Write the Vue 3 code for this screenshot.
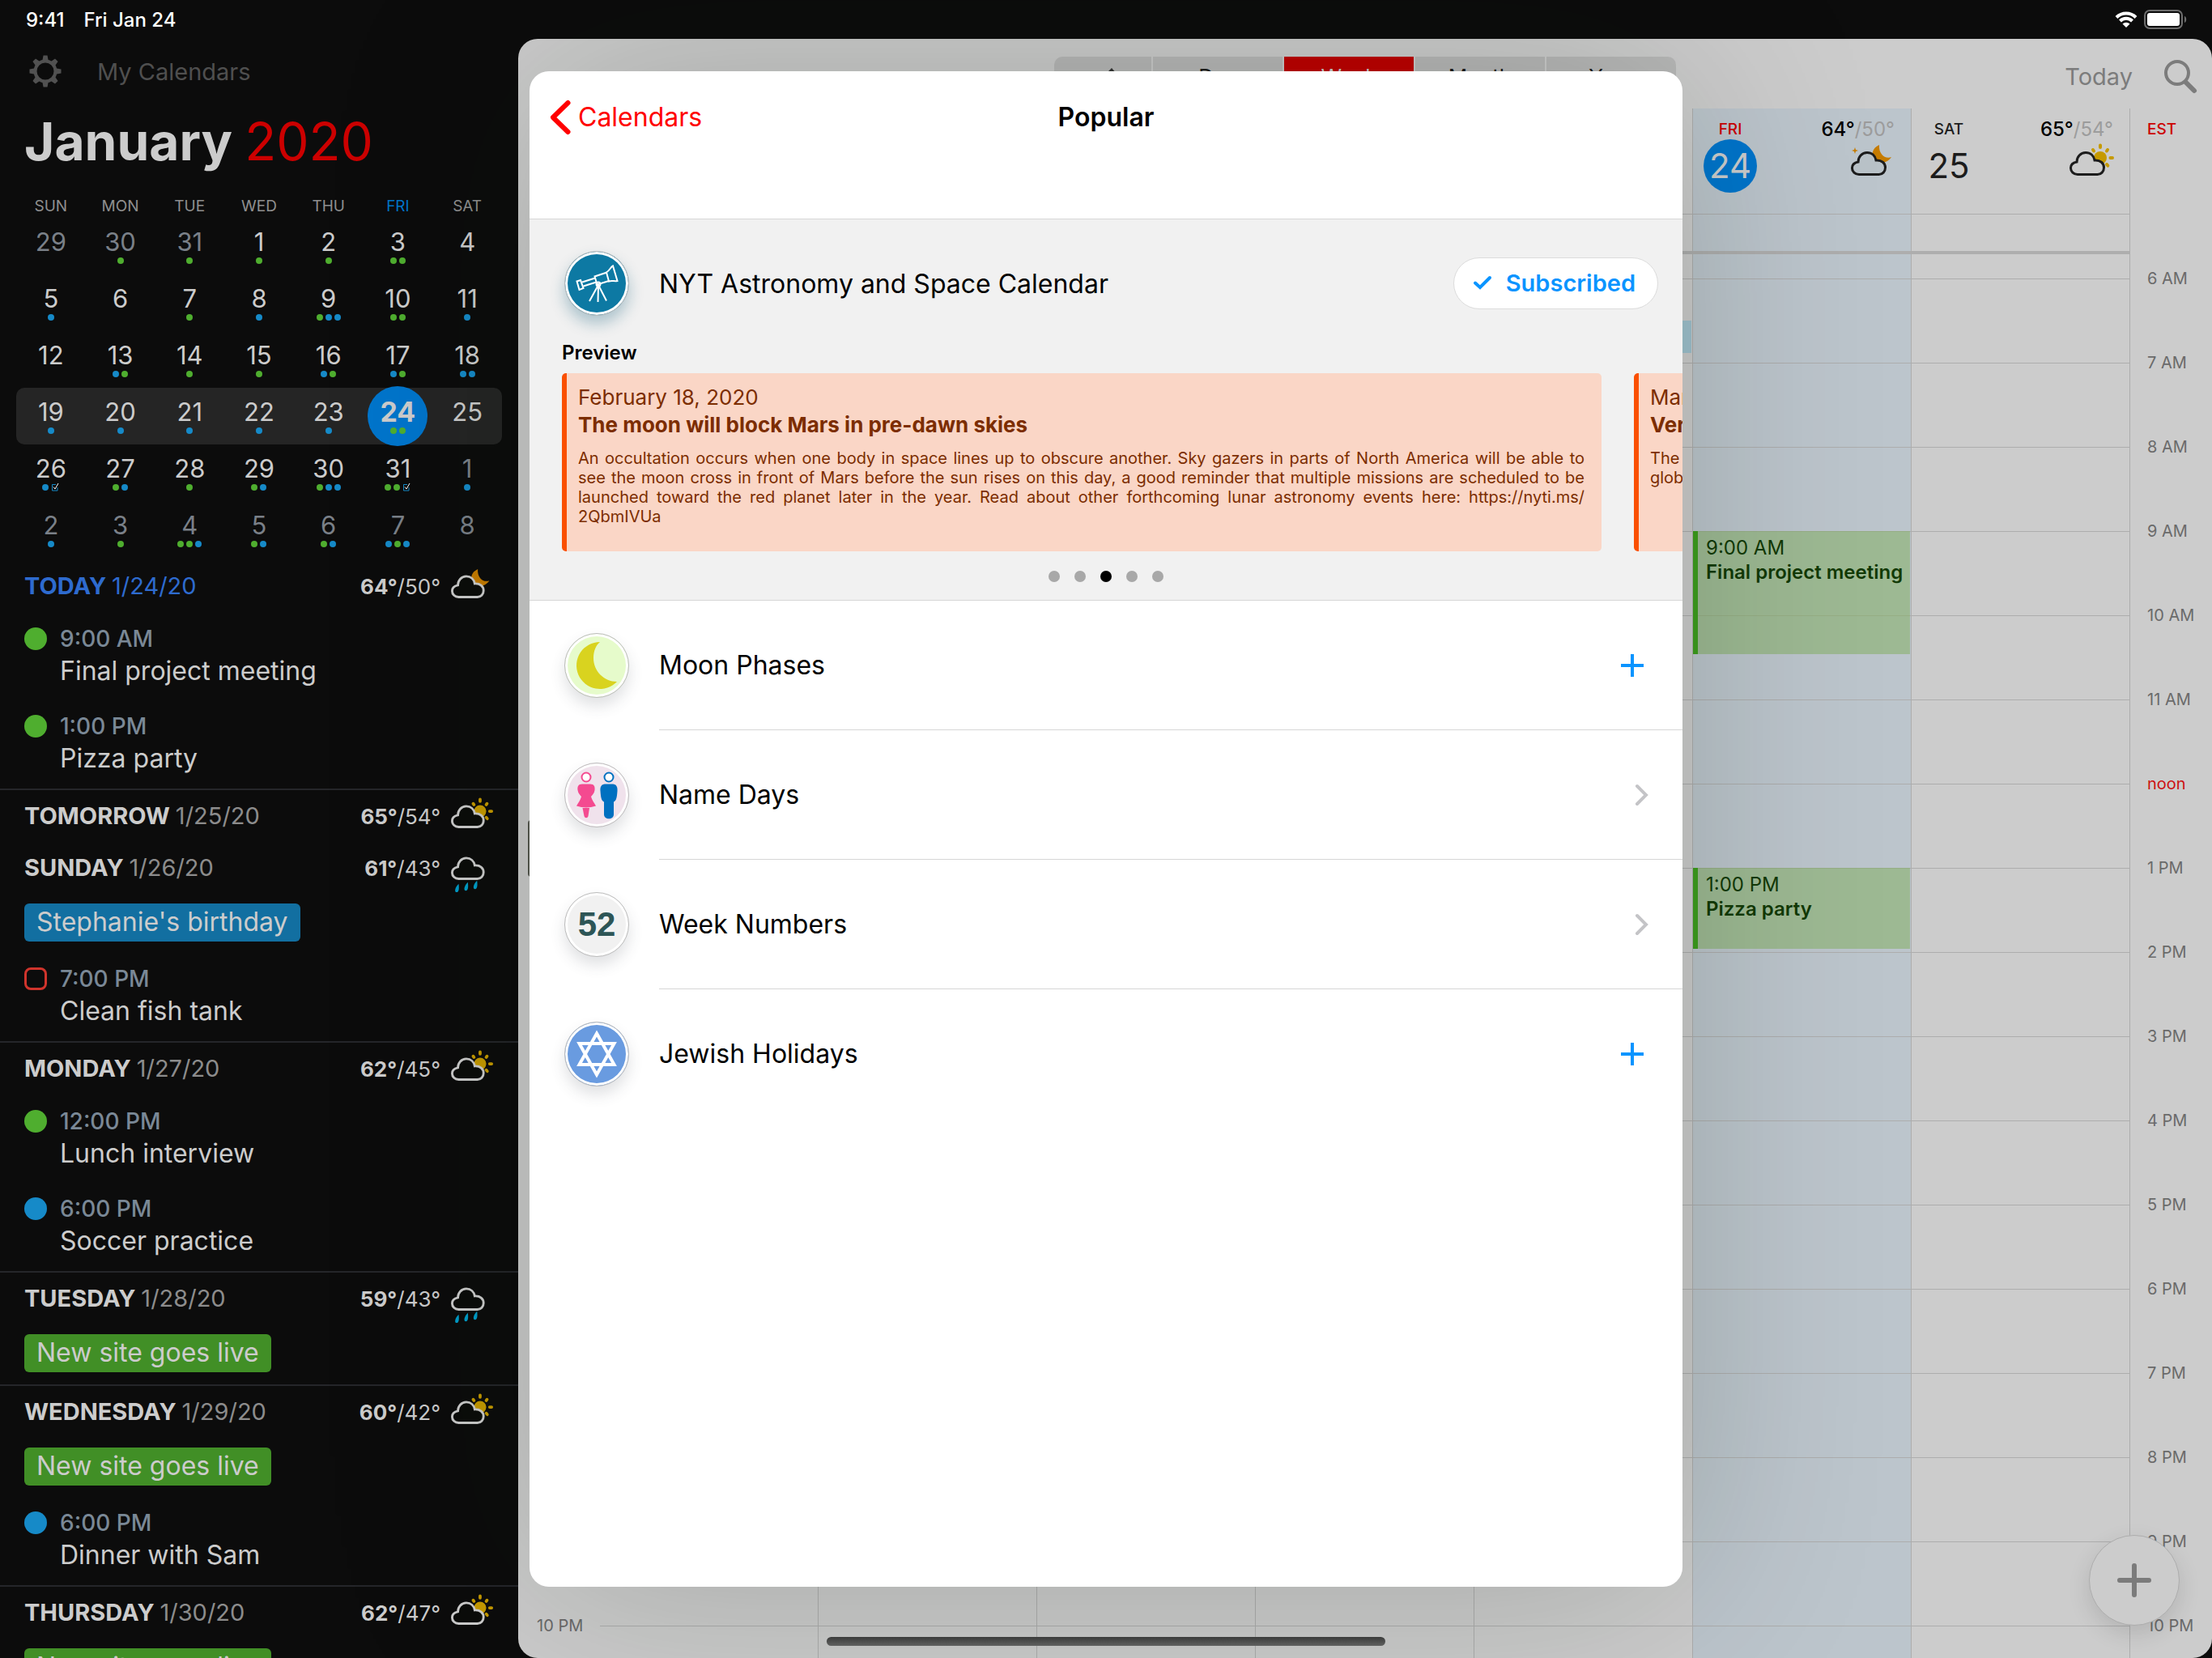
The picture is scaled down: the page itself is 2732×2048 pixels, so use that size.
<script setup>
import { h, ref } from "vue";

const GREEN = 'green'
const BLUE = 'blue'
const TASK = 'task'

const weekdays = ['SUN', 'MON', 'TUE', 'WED', 'THU', 'FRI', 'SAT']

const weeks = ref([
  {
    days: [
      { n: 29, out: true, marks: [] },
      { n: 30, out: true, marks: [GREEN] },
      { n: 31, out: true, marks: [GREEN] },
      { n: 1, marks: [GREEN] },
      { n: 2, marks: [GREEN] },
      { n: 3, marks: [GREEN, GREEN] },
      { n: 4, marks: [] }
    ]
  },
  {
    days: [
      { n: 5, marks: [BLUE] },
      { n: 6, marks: [] },
      { n: 7, marks: [GREEN] },
      { n: 8, marks: [BLUE] },
      { n: 9, marks: [GREEN, BLUE, BLUE] },
      { n: 10, marks: [GREEN, GREEN] },
      { n: 11, marks: [BLUE] }
    ]
  },
  {
    days: [
      { n: 12, marks: [] },
      { n: 13, marks: [BLUE, GREEN] },
      { n: 14, marks: [GREEN] },
      { n: 15, marks: [GREEN] },
      { n: 16, marks: [BLUE, GREEN] },
      { n: 17, marks: [BLUE, GREEN] },
      { n: 18, marks: [BLUE, BLUE] }
    ]
  },
  {
    current: true,
    days: [
      { n: 19, marks: [BLUE] },
      { n: 20, marks: [BLUE] },
      { n: 21, marks: [BLUE] },
      { n: 22, marks: [BLUE] },
      { n: 23, marks: [BLUE] },
      { n: 24, today: true, marks: [GREEN, GREEN] },
      { n: 25, marks: [] }
    ]
  },
  {
    days: [
      { n: 26, marks: [BLUE, TASK] },
      { n: 27, marks: [GREEN, BLUE] },
      { n: 28, marks: [GREEN] },
      { n: 29, marks: [GREEN, BLUE] },
      { n: 30, marks: [GREEN, BLUE, BLUE] },
      { n: 31, marks: [GREEN, GREEN, TASK] },
      { n: 1, out: true, marks: [BLUE] }
    ]
  },
  {
    days: [
      { n: 2, out: true, marks: [BLUE] },
      { n: 3, out: true, marks: [GREEN] },
      { n: 4, out: true, marks: [GREEN, GREEN, BLUE] },
      { n: 5, out: true, marks: [GREEN, BLUE] },
      { n: 6, out: true, marks: [GREEN, BLUE] },
      { n: 7, out: true, marks: [BLUE, GREEN, BLUE] },
      { n: 8, out: true, marks: [] }
    ]
  }
])

const agenda = ref([
  {
    name: 'TODAY', date: '1/24/20', today: true, line: true, hi: '64°', lo: '50°', sky: 'moon',
    items: [
      { kind: 'dot', color: GREEN, time: '9:00 AM', title: 'Final project meeting' },
      { kind: 'dot', color: GREEN, time: '1:00 PM', title: 'Pizza party' }
    ]
  },
  { name: 'TOMORROW', date: '1/25/20', hi: '65°', lo: '54°', sky: 'sun', items: [] },
  {
    name: 'SUNDAY', date: '1/26/20', line: true, hi: '61°', lo: '43°', sky: 'rain',
    items: [
      { kind: 'allday', color: BLUE, title: "Stephanie's birthday" },
      { kind: 'task', time: '7:00 PM', title: 'Clean fish tank' }
    ]
  },
  {
    name: 'MONDAY', date: '1/27/20', line: true, hi: '62°', lo: '45°', sky: 'sun',
    items: [
      { kind: 'dot', color: GREEN, time: '12:00 PM', title: 'Lunch interview' },
      { kind: 'dot', color: BLUE, time: '6:00 PM', title: 'Soccer practice' }
    ]
  },
  {
    name: 'TUESDAY', date: '1/28/20', line: true, hi: '59°', lo: '43°', sky: 'rain',
    items: [{ kind: 'allday', color: GREEN, title: 'New site goes live' }]
  },
  {
    name: 'WEDNESDAY', date: '1/29/20', line: true, hi: '60°', lo: '42°', sky: 'sun',
    items: [
      { kind: 'allday', color: GREEN, title: 'New site goes live' },
      { kind: 'dot', color: BLUE, time: '6:00 PM', title: 'Dinner with Sam' }
    ]
  },
  {
    name: 'THURSDAY', date: '1/30/20', line: true, hi: '62°', lo: '47°', sky: 'sun',
    items: [{ kind: 'allday', color: GREEN, title: 'New site goes live' }]
  }
])

const views = ['Day', 'Week', 'Month', 'Year']
const view = ref('Week')

const hours = [
  '6 AM', '7 AM', '8 AM', '9 AM', '10 AM', '11 AM', 'noon', '1 PM', '2 PM',
  '3 PM', '4 PM', '5 PM', '6 PM', '7 PM', '8 PM', '9 PM', '10 PM'
]

// row / span count half hours from 6 AM
const columns = ref([
  { id: 19, events: [] },
  { id: 20, events: [] },
  { id: 21, events: [] },
  { id: 22, events: [] },
  { id: 23, events: [{ row: 2, span: 1, color: BLUE }] },
  {
    id: 24, name: 'FRI', today: true, hi: '64°', lo: '50°', sky: 'moon-star',
    events: [
      { row: 7, span: 3, color: GREEN, time: '9:00 AM', title: 'Final project meeting' },
      { row: 15, span: 2, color: GREEN, time: '1:00 PM', title: 'Pizza party' }
    ]
  },
  { id: 25, name: 'SAT', hi: '65°', lo: '54°', sky: 'sun', events: [] }
])

const previews = ref([
  {
    date: 'February 18, 2020',
    title: 'The moon will block Mars in pre-dawn skies',
    lines: [
      'An occultation occurs when one body in space lines up to obscure another. Sky gazers in parts of North America will be able to',
      'see the moon cross in front of Mars before the sun rises on this day, a good reminder that multiple missions are scheduled to be',
      'launched toward the red planet later in the year. Read about other forthcoming lunar astronomy events here: https://nyti.ms/',
      '2QbmIVUa'
    ]
  },
  { date: 'March', title: 'Vernal', short: true, lines: ['The', 'globe'] }
])

const calendars = ref([
  { id: 'moon', name: 'Moon Phases', action: 'add' },
  { id: 'names', name: 'Name Days', action: 'open' },
  { id: 'weeks', name: 'Week Numbers', action: 'open' },
  { id: 'jewish', name: 'Jewish Holidays', action: 'add' }
])
const page = ref(3)

const CLOUD = 'M10 28.5C5 28.5 1.5 25 1.5 20.5C1.5 16.5 4 14 9 13C9 7 13.5 1.5 20 1.5C26 1.5 30 5.5 31 11C38 10.5 42.5 14.5 42.5 20C42.5 25 39 28.5 34.5 28.5Z'

const WeatherIcon = ({ kind }) => {
  const parts = []
  if (kind === 'sun') {
    parts.push(h('circle', { class: 'sun', cx: 38, cy: 8, r: 8 }))
    parts.push(h('path', {
      class: 'rays',
      d: 'M38 -7.5V-5M47 -2L46 -0.5M50.5 8H53M46 16L47.3 17.6M29 -2L30 -0.5'
    }))
  }
  if (kind === 'moon' || kind === 'moon-star') {
    parts.push(h('path', {
      class: 'moon',
      d: 'M35 -8C26 -4 24 5 30 12C34 16 45 15 50 7C43 10 34 4 35 -8Z'
    }))
  }
  if (kind === 'moon-star') {
    parts.push(h('path', {
      class: 'moon',
      d: 'M5 -5L6 -2L9 -1L6 0L5 3L4 0L1 -1L4 -2Z'
    }))
  }
  parts.push(h('path', { class: 'cloud', d: CLOUD }))
  if (kind === 'rain') {
    parts.push(h('path', {
      class: 'drops',
      d: 'M10 35C11 42 10 46 7.5 46C4 46 5 40 10 35ZM22 33C23 40 22 44 19.5 44C16 44 17 38 22 33ZM34 31C35 38 34 42 31.5 42C28 42 29 36 34 31Z'
    }))
  }
  return h('svg', { class: 'weather', viewBox: '0 -10 56 58', 'aria-hidden': 'true' }, parts)
}
WeatherIcon.props = ['kind']
</script>

<template>
  <div class="screen">
    <div class="status">
      <span>9:41</span>
      <span>Fri Jan 24</span>
      <svg class="wifi" viewBox="0 0 28 20">
        <path d="M2 7.5A17 17 0 0 1 26 7.5" />
        <path d="M6.5 12A10.500 10.500 0 0 1 21.500 12" />
        <path class="solid" d="M9.500 15.500A6.500 6.500 0 0 1 18.500 15.500L14 20Z" />
      </svg>
      <svg class="battery" viewBox="0 0 54 24">
        <rect class="shell" x="1" y="1" width="46" height="22" rx="6" />
        <rect class="charge" x="4" y="4" width="40" height="16" rx="3" />
        <path class="tip" d="M50 8C53 9 53 15 50 16Z" />
      </svg>
    </div>

    <div class="body">
      <aside class="sidebar">
        <div class="tools">
          <button class="gear" type="button" aria-label="Settings">
            <svg viewBox="0 0 40 40">
              <path
                v-for="a in 8"
                :key="a"
                :transform="`rotate(${a * 45} 20 20)`"
                d="M17.500 0.500h5l1.500 8h-8z"
              />
              <circle cx="20" cy="20" r="12.500" />
            </svg>
          </button>
          <a class="mine" href="#">My Calendars</a>
        </div>

        <h1 class="month">January <span>2020</span></h1>

        <div class="weekdays">
          <span v-for="d in weekdays" :key="d" :class="{ on: d === 'FRI' }">{{ d }}</span>
        </div>
        <div class="week" v-for="(week, i) in weeks" :key="i" :class="{ current: week.current }">
          <button
            type="button"
            class="day"
            v-for="day in week.days"
            :key="day.n"
            :class="{ out: day.out, today: day.today }"
          >
            <span class="num">{{ day.n }}</span>
            <span class="marks">
              <template v-for="(m, k) in day.marks" :key="k">
                <svg v-if="m === 'task'" class="mini-task" viewBox="0 0 10 10">
                  <path class="box" d="M6 1.500H1.500V9H8V5" />
                  <path class="tick" d="M3 4.500L5 7L9 0" />
                </svg>
                <i v-else :class="m"></i>
              </template>
            </span>
          </button>
        </div>

        <div class="agenda">
          <section v-for="day in agenda" :key="day.date" :class="{ line: day.line }">
            <header :class="{ now: day.today }">
              <h2>{{ day.name }} <span>{{ day.date }}</span></h2>
              <p class="temps"><b>{{ day.hi }}</b>/{{ day.lo }}</p>
              <WeatherIcon :kind="day.sky" />
            </header>
            <template v-for="item in day.items" :key="item.title">
              <div v-if="item.kind === 'allday'" class="allday">
                <a href="#" :class="item.color">{{ item.title }}</a>
              </div>
              <label v-else-if="item.kind === 'task'" class="entry">
                <input type="checkbox">
                <span class="time">{{ item.time }}</span>
                <span class="what">{{ item.title }}</span>
              </label>
              <div v-else class="entry">
                <i :class="item.color"></i>
                <span class="time">{{ item.time }}</span>
                <span class="what">{{ item.title }}</span>
              </div>
            </template>
          </section>
        </div>
      </aside>

      <main class="panel">
        <div class="bar">
          <div class="segments">
            <button type="button" class="list" aria-label="List">
              <svg viewBox="0 0 40 28"><path d="M31 4l6 7-14 14-8 2 2-9z" /></svg>
            </button>
            <button
              type="button"
              v-for="v in views"
              :key="v"
              :class="{ on: v === view }"
              @click="view = v"
            >{{ v }}</button>
          </div>
          <div class="right">
            <a href="#">Today</a>
            <button class="search" type="button" aria-label="Search">
              <svg viewBox="0 0 42 42">
                <circle cx="17" cy="17" r="14" />
                <path class="handle" d="M28 29L38 39" />
              </svg>
            </button>
          </div>
        </div>

        <div class="grid">
          <div class="gutter">
            <div class="zone"></div>
            <div class="hour" v-for="t in hours" :key="t">{{ t }}</div>
          </div>
          <div class="column" v-for="col in columns" :key="col.id" :class="{ today: col.today }">
            <div class="head">
              <template v-if="col.name">
                <div class="which">
                  <span>{{ col.name }}</span>
                  <b>{{ col.id }}</b>
                </div>
                <div class="forecast">
                  <p><b>{{ col.hi }}</b>/{{ col.lo }}</p>
                  <WeatherIcon :kind="col.sky" />
                </div>
              </template>
            </div>
            <div class="banner"></div>
            <div class="slots">
              <div
                class="slot"
                v-for="(t, i) in hours"
                :key="t"
                :style="{ gridRow: `${i * 2 + 1} / span 2` }"
              ></div>
              <div
                class="event"
                v-for="e in col.events"
                :key="e.row"
                :class="e.color"
                :style="{ gridRow: `${e.row} / span ${e.span}` }"
              >
                <span>{{ e.time }}</span>
                <b>{{ e.title }}</b>
              </div>
            </div>
          </div>
          <div class="gutter end">
            <div class="zone">EST</div>
            <div class="hour" v-for="t in hours" :key="t" :class="{ noon: t === 'noon' }">{{ t }}</div>
          </div>
        </div>

        <button class="fab" type="button" aria-label="New event">
          <svg viewBox="0 0 42 42"><path d="M21 3V39M3 21H39" /></svg>
        </button>
      </main>
    </div>

    <div class="home"></div>

    <div class="overlay">
      <span class="grip"></span>
      <div class="modal" role="dialog" aria-labelledby="modal-title">
        <header class="top">
          <a class="back" href="#">
            <svg viewBox="0 0 26 42"><path d="M22.500 3L4 21L22.500 39" /></svg>
            Calendars
          </a>
          <h2 id="modal-title">Popular</h2>
        </header>

        <section class="featured">
          <div class="lead">
            <span class="badge astro">
              <svg viewBox="0 0 80 80">
                <path d="M52 26.500C56 24 57 20 60 18.500L65.500 37C62 38 59 36 55 37.500Z" />
                <path d="M52.500 26.500L37.500 31.500L40.500 41.500L55 37" />
                <path d="M38 33.500L22 38.500M39.500 38.500L23.500 43.500" />
                <path d="M15.500 37.500L20 36L23.500 46L18.500 48Z" />
                <path d="M42 42L31 62M42 42L41.500 63M42 42L52 61.500" />
                <circle cx="42" cy="41" r="2.500" />
              </svg>
            </span>
            <h3>NYT Astronomy and Space Calendar</h3>
            <button class="subscribed" type="button">
              <svg viewBox="0 0 24 18"><path d="M3 9.500L9 15L21 3" /></svg>
              Subscribed
            </button>
          </div>
          <h4>Preview</h4>
          <div class="cards">
            <article class="card" v-for="p in previews" :key="p.date">
              <p class="date">{{ p.date }}</p>
              <h5>{{ p.title }}</h5>
              <p class="text" :class="{ short: p.short }">
                <span v-for="line in p.lines" :key="line">{{ line }}</span>
              </p>
            </article>
          </div>
          <div class="pages">
            <button
              type="button"
              v-for="p in 5"
              :key="p"
              :class="{ on: p === page }"
              :aria-label="`Page ${p}`"
              @click="page = p"
            ></button>
          </div>
        </section>

        <ul class="catalog">
          <li v-for="cal in calendars" :key="cal.id">
            <span class="badge" :class="cal.id">
              <svg v-if="cal.id === 'moon'" viewBox="0 0 80 80">
                <path class="crescent" d="M44 11A29 29 0 1 0 65 60C49 60 36 47 36 31C36 22 39 15 44 11Z" />
              </svg>
              <svg v-else-if="cal.id === 'names'" viewBox="0 0 80 80">
                <g class="woman">
                  <circle cx="27" cy="18" r="5.500" />
                  <path d="M22 26.500H32C37 26.500 38 30 37.500 34C37 38 34.500 40 33 42C34 46 37 50 39 53.500C31 56 23 56 15 53.500C17 50 20 46 21 42C19.500 40 17 38 16.500 34C16 30 17 26.500 22 26.500Z" />
                  <path d="M22.500 56H31L29.500 66C28.500 69 25.500 69 24.500 66Z" />
                </g>
                <g class="man">
                  <circle cx="55" cy="18" r="5.500" />
                  <path d="M50 26.500H60C64 26.500 66 30 65.500 35C65 42 64.500 47 61 48.500V64C61 71 49 71 49 64V48.500C45.500 47 45 42 44.500 35C44 30 46 26.500 50 26.500Z" />
                </g>
              </svg>
              <b v-else-if="cal.id === 'weeks'">52</b>
              <svg v-else viewBox="0 0 80 80">
                <path d="M40 14.500L61.500 53H18.500ZM40 65.500L18.500 27H61.500Z" />
              </svg>
            </span>
            <div class="row">
              <span>{{ cal.name }}</span>
              <button type="button" :class="cal.action" :aria-label="`${cal.action} ${cal.name}`">
                <svg v-if="cal.action === 'add'" viewBox="0 0 36 28"><path d="M14 0V28M0 14H28" /></svg>
                <svg v-else viewBox="0 0 36 28"><path d="M20 3L31 14L20 25" /></svg>
              </button>
            </div>
          </li>
        </ul>
      </div>
    </div>
  </div>
</template>

<style>
body {
  margin: 0;
  background: #0c0c0c;
}
</style>

<style scoped>
.screen {
  position: relative;
  height: 100vh;
  overflow: hidden;
  display: flex;
  flex-direction: column;
  background: #0c0c0c;
  color: #cccccc;
  font-family: Inter, "Liberation Sans", sans-serif;
}

.screen * {
  box-sizing: border-box;
}

h1, h2, h3, h4, h5, p, ul {
  margin: 0;
  padding: 0;
}

a {
  color: inherit;
  text-decoration: none;
}

button {
  margin: 0;
  padding: 0;
  border: 0;
  background: none;
  color: inherit;
  font: inherit;
}

svg {
  display: block;
  overflow: visible;
  fill: none;
}

.green {
  background: #4fae2f;
}

.blue {
  background: #168ac8;
}

/* status bar */
.status {
  flex: none;
  height: 48px;
  padding: 0 30px 0 32px;
  display: flex;
  align-items: center;
  gap: 24px;
  color: #ffffff;
  font-size: 24px;
  font-weight: 500;
}

.wifi {
  width: 28px;
  height: 20px;
  margin-left: auto;
  margin-right: -16px;
  stroke: #ffffff;
  stroke-width: 4;
}

.wifi .solid {
  fill: #ffffff;
  stroke: none;
}

.battery {
  width: 54px;
  height: 24px;
}

.battery .shell {
  stroke: #6d6d6d;
  stroke-width: 2;
}

.battery .charge {
  fill: #ffffff;
}

.battery .tip {
  fill: #6d6d6d;
}

.body {
  flex: 1;
  min-height: 0;
  display: flex;
}

/* sidebar */
.sidebar {
  flex: 0 0 640px;
  overflow: hidden;
  padding-top: 20px;
}

.tools {
  height: 40px;
  padding-left: 36px;
  display: flex;
  align-items: center;
  gap: 44px;
  color: #4f4f4f;
  font-size: 29px;
}

.gear svg {
  width: 40px;
  height: 40px;
  fill: #515151;
}

.gear circle {
  fill: #0c0c0c;
  stroke: #515151;
  stroke-width: 4;
}

.month {
  margin: 27px 0 26px 30px;
  font-size: 64px;
  line-height: 80px;
  font-weight: 700;
}

.month span {
  color: #cc0000;
  font-weight: 400;
}

.weekdays, .week {
  margin: 0 20px;
  display: grid;
  grid-template-columns: repeat(7, 1fr);
  text-align: center;
}

.weekdays {
  color: #8f8f8f;
  font-size: 19px;
  line-height: 28px;
}

.weekdays .on {
  color: #0075cc;
}

.week.current {
  background: #252525;
  border-radius: 10px;
}

.day {
  position: relative;
  height: 70px;
  display: flex;
  flex-direction: column;
  align-items: center;
  padding-top: 11px;
}

.day.out {
  color: #7a8088;
}

.day.today::before {
  content: "";
  position: absolute;
  top: -2px;
  left: 50%;
  width: 74px;
  height: 74px;
  margin-left: -37px;
  border-radius: 50%;
  background: #0075cc;
}

.num {
  position: relative;
  font-size: 31px;
  line-height: 38px;
}

.today .num {
  font-size: 34px;
  font-weight: 700;
}

.marks {
  position: relative;
  display: flex;
  gap: 3px;
}

.marks i {
  width: 8px;
  height: 8px;
  border-radius: 50%;
}

.mini-task {
  width: 10px;
  height: 10px;
  margin-top: -1px;
}

.mini-task .box {
  stroke: #168ac8;
}

.mini-task .tick {
  stroke: #ffffff;
}

/* agenda */
.agenda {
  margin-top: 3px;
}

.agenda .line {
  padding-bottom: 2px;
  border-bottom: 2px solid #25262a;
}

.agenda header {
  height: 64px;
  padding: 0 30px;
  display: flex;
  align-items: baseline;
  line-height: 64px;
}

.agenda h2 {
  flex: 1;
  font-size: 29px;
  font-weight: 700;
}

.agenda h2 span {
  color: #8c8c8c;
  font-weight: 400;
}

.agenda .now h2, .agenda .now h2 span {
  color: #2e6bcf;
}

.temps {
  font-size: 26px;
}

.agenda .weather {
  --sky: #0b0c0a;
  align-self: flex-start;
  width: 53px;
  height: 55px;
  margin: 9px 0 0 13px;
  stroke: #cccccc;
}

.weather :deep(.cloud) {
  fill: var(--sky);
  stroke: inherit;
  stroke-width: 3;
}

.weather :deep(.sun) {
  fill: #c69a00;
  stroke: none;
}

.weather :deep(.rays) {
  stroke: #c69a00;
  stroke-width: 4;
  stroke-linecap: round;
}

.weather :deep(.moon) {
  fill: #c67c00;
  stroke: none;
}

.weather :deep(.drops) {
  fill: #009dc9;
  stroke: none;
}

.allday {
  height: 72px;
  padding: 12px 30px;
}

.allday a {
  display: inline-block;
  height: 47px;
  padding: 0 15px;
  border-radius: 6px;
  font-size: 32px;
  line-height: 46px;
}

.allday .green {
  background: #418f26;
}

.allday .blue {
  background: #126fa1;
}

.entry {
  height: 108px;
  padding: 13px 30px 0;
  display: grid;
  grid-template-columns: 44px 1fr;
  grid-template-rows: 40px 38px;
  align-items: center;
}

.entry i {
  width: 28px;
  height: 28px;
  border-radius: 50%;
}

.entry input {
  appearance: none;
  width: 28px;
  height: 28px;
  margin: 0;
  border: 3px solid #d0342c;
  border-radius: 8px;
}

.entry .time {
  color: #7a8896;
  font-size: 28px;
  font-weight: 500;
}

.entry .what {
  grid-column: 2;
  font-size: 32px;
}

/* week view */
.panel {
  position: relative;
  flex: 1;
  min-width: 0;
  overflow: hidden;
  display: flex;
  flex-direction: column;
  border-radius: 24px;
  background: #cccccc;
}

.bar {
  position: relative;
  flex: none;
  height: 86px;
  display: flex;
  align-items: flex-start;
  justify-content: center;
  padding-top: 22px;
}

.segments {
  display: flex;
  gap: 2px;
  height: 48px;
  border-radius: 10px;
  overflow: hidden;
}

.segments button {
  width: 160px;
  background: #b8b8b8;
  color: #1c1c1c;
  font-size: 26px;
}

.segments .on {
  background: #bf0000;
  color: #cccccc;
}

.segments .list {
  width: 120px;
}

.segments svg {
  width: 40px;
  height: 28px;
  margin: 0 auto;
  fill: #333333;
}

.bar .right {
  position: absolute;
  top: 25px;
  right: 18px;
  display: flex;
  align-items: center;
  gap: 38px;
  color: #7c7c7c;
  font-size: 29px;
}

.search svg {
  width: 42px;
  height: 42px;
  stroke: #7c7c7c;
  stroke-width: 4;
  stroke-linecap: round;
}

.search .handle {
  stroke-width: 6;
}

.grid {
  flex: 1;
  min-height: 0;
  overflow: hidden;
  display: grid;
  grid-template-columns: 100px repeat(7, 1fr) 102px;
}

.gutter {
  padding-left: 23px;
  color: #6a6a6a;
  font-size: 20px;
}

.gutter.end {
  padding-left: 21px;
  border-left: 1px solid #adadad;
}

.zone {
  height: 158px;
  padding-top: 14px;
  color: #cc0000;
  line-height: 24px;
  font-size: 19px;
  font-weight: 500;
}

.hour {
  height: 104px;
  line-height: 104px;
}

.hour.noon {
  color: #cc1212;
}

.column {
  border-left: 1px solid #adadad;
}

.column.today {
  background: #bcc5cc;
  --sky: #b9c2c8;
}

.gutter + .column {
  border-left-color: transparent;
}

.head {
  height: 131px;
  padding: 14px 20px 0 13px;
  display: flex;
  justify-content: space-between;
  border-bottom: 1px solid #adadad;
  color: #1c1c1c;
}

.which {
  width: 66px;
  text-align: center;
}

.which span {
  display: block;
  font-size: 19px;
  line-height: 24px;
  font-weight: 500;
}

.which b {
  display: block;
  width: 66px;
  height: 66px;
  border-radius: 50%;
  font-size: 42px;
  line-height: 66px;
  font-weight: 400;
}

.today .which span {
  color: #cc0000;
}

.today .which b {
  background: #0075cc;
  color: #cccccc;
}

.forecast {
  color: #9c9c9c;
  font-size: 24px;
  line-height: 24px;
}

.forecast b {
  color: #000000;
  font-weight: 500;
}

.forecast .weather {
  width: 56px;
  height: 58px;
  margin: 5px -2px 0 auto;
  stroke: #1c1c1c;
}

.column:not(.today) .forecast .weather {
  --sky: #cccccc;
}

.banner {
  height: 49px;
  border-bottom: 4px solid #aeaeae;
}

.slots {
  display: grid;
  grid-template-columns: 1fr;
  grid-auto-rows: 52px;
  padding-top: 30px;
}

.slot {
  grid-column: 1;
  border-top: 1px solid #adadad;
}

.event {
  grid-column: 1;
  margin: 0 1px 4px 0;
  padding: 6px 0 0 10px;
  border-left: 6px solid #3d9e1d;
  font-size: 24px;
  line-height: 30px;
  white-space: nowrap;
  overflow: hidden;
}

.event span, .event b {
  display: block;
}

.event b {
  font-weight: 600;
}

.event.green {
  background: rgba(132, 175, 100, 0.55);
  color: #123a06;
}

.event.blue {
  margin-bottom: 12px;
  border-left-color: #168ac8;
  background: #9fc2cf;
}

.fab {
  position: absolute;
  right: 40px;
  bottom: 40px;
  width: 112px;
  height: 112px;
  display: flex;
  align-items: center;
  justify-content: center;
  border: 1px solid #adadad;
  border-radius: 50%;
  background: #cccccc;
  box-shadow: 0 10px 28px rgba(0, 0, 0, 0.12);
}

.fab svg {
  width: 42px;
  height: 42px;
  stroke: #7b7b7b;
  stroke-width: 6;
  stroke-linecap: round;
}

.home {
  position: absolute;
  z-index: 1;
  bottom: 15px;
  left: 50%;
  width: 690px;
  height: 11px;
  border-radius: 6px;
  transform: translateX(-50%);
  background: linear-gradient(#3f3f3f, #666666);
}

/* popular calendars dialog */
.overlay {
  position: absolute;
  z-index: 2;
  inset: 0;
  display: flex;
  align-items: center;
  justify-content: center;
}

.grip {
  width: 10px;
  height: 70px;
  margin: 48px -8px 0 0;
  border-radius: 4px;
  background: #55574f;
}

.modal {
  position: relative;
  width: 1424px;
  max-width: 90%;
  height: calc(100% - 176px);
  margin-right: 2px;
  overflow: hidden;
  border-radius: 24px;
  background: #ffffff;
  color: #000000;
  font-size: 32px;
}

.overlay::before {
  content: "";
  position: absolute;
  top: 88px;
  bottom: 88px;
  left: 50%;
  width: 1424px;
  max-width: 90%;
  border-radius: 24px;
  transform: translateX(-50%);
  box-shadow: 0 0 360px rgba(0, 22, 0, 0.2);
}

.top {
  padding: 33px 25px 101px;
  display: grid;
  grid-template-columns: 1fr auto 1fr;
  line-height: 48px;
  border-bottom: 1px solid #d6d6d6;
}

.top h2 {
  font-size: 32px;
  font-weight: 600;
}

.back {
  display: flex;
  align-items: center;
  gap: 9px;
  color: #ff0000;
}

.back svg {
  width: 26px;
  height: 42px;
  stroke: #ff0000;
  stroke-width: 6;
  stroke-linecap: round;
  stroke-linejoin: round;
}

.featured {
  padding: 39px 0 22px;
  background: #f1f1f1;
  border-bottom: 1px solid #d6d6d6;
}

.lead {
  padding: 0 30px 0 43px;
  display: flex;
  align-items: center;
}

.lead h3 {
  flex: 1;
  margin-left: 37px;
  font-size: 32px;
  font-weight: 400;
}

.badge {
  flex: none;
  width: 80px;
  height: 80px;
  display: flex;
  align-items: center;
  justify-content: center;
  border: 1px solid #bcbcbc;
  border-radius: 50%;
  box-shadow: inset 0 0 0 3px #ffffff, 0 10px 18px rgba(60, 70, 80, 0.16);
}

.badge svg {
  width: 80px;
  height: 80px;
  flex: none;
  stroke: #ffffff;
  stroke-width: 4;
}

.badge.astro {
  background: #0d79a3;
  box-shadow: inset 0 0 0 3px #ffffff, 0 10px 18px rgba(13, 90, 120, 0.3);
}

.badge.astro svg {
  stroke-width: 2;
}

.badge.moon {
  background: #e6fbcb;
}

.badge .crescent {
  fill: #d9d31f;
  stroke: none;
}

.badge.names {
  background: #f0e2ec;
}

.woman path {
  fill: #f44a90;
  stroke: none;
}

.man path {
  fill: #0070c0;
  stroke: none;
}

.woman circle, .man circle {
  fill: #ffffff;
  stroke: #f44a90;
  stroke-width: 2;
}

.man circle {
  stroke: #0070c0;
}

.badge.weeks {
  background: #f1f1f1;
  color: #2d5556;
  font-family: "Liberation Sans", Arial, sans-serif;
  font-size: 42px;
}

.badge.jewish {
  background: #699be0;
}

.subscribed {
  height: 64px;
  padding: 0 27px 2px 23px;
  display: flex;
  align-items: center;
  gap: 17px;
  border: 1px solid #dcdcdc;
  border-radius: 32px;
  background: #ffffff;
  color: #0a94ff;
  font-size: 29px;
  font-weight: 600;
}

.subscribed svg {
  width: 24px;
  height: 18px;
  stroke: #0a94ff;
  stroke-width: 4;
  stroke-linecap: round;
}

h4 {
  margin: 32px 0 11px 40px;
  font-size: 24px;
  line-height: 28px;
  font-weight: 600;
}

.cards {
  padding-left: 40px;
  display: flex;
  gap: 40px;
  overflow: hidden;
}

.card {
  flex: 0 0 calc(100% - 100px);
  height: 220px;
  padding: 13px 21px 0 14px;
  border-left: 6px solid #fa4f00;
  border-radius: 5px;
  background: #fad6c6;
  color: #7c2d00;
}

.date, h5 {
  font-size: 26px;
  line-height: 34px;
}

h5 {
  font-weight: 700;
}

.text {
  margin-top: 12px;
  font-size: 20px;
  line-height: 24px;
}

.text span {
  display: block;
  text-align-last: justify;
}

.text span:last-child, .text.short span {
  text-align-last: left;
}

.pages {
  margin-top: 24px;
  display: flex;
  justify-content: center;
  gap: 18px;
}

.pages button {
  width: 14px;
  height: 14px;
  border-radius: 50%;
  background: #a8a8a8;
}

.pages .on {
  background: #000000;
}

.catalog {
  list-style: none;
}

.catalog li {
  padding-left: 43px;
  display: flex;
  align-items: center;
}

.row {
  flex: 1;
  height: 160px;
  margin-left: 37px;
  padding-right: 40px;
  display: flex;
  align-items: center;
  justify-content: space-between;
  border-bottom: 1px solid #d6d6d6;
}

.catalog li:last-child .row {
  border-bottom-color: transparent;
}

.row svg {
  width: 36px;
  height: 28px;
  stroke: #0a94ff;
  stroke-width: 4;
}

.row .open svg {
  stroke: #c4c4c7;
  stroke-linecap: round;
}
</style>
